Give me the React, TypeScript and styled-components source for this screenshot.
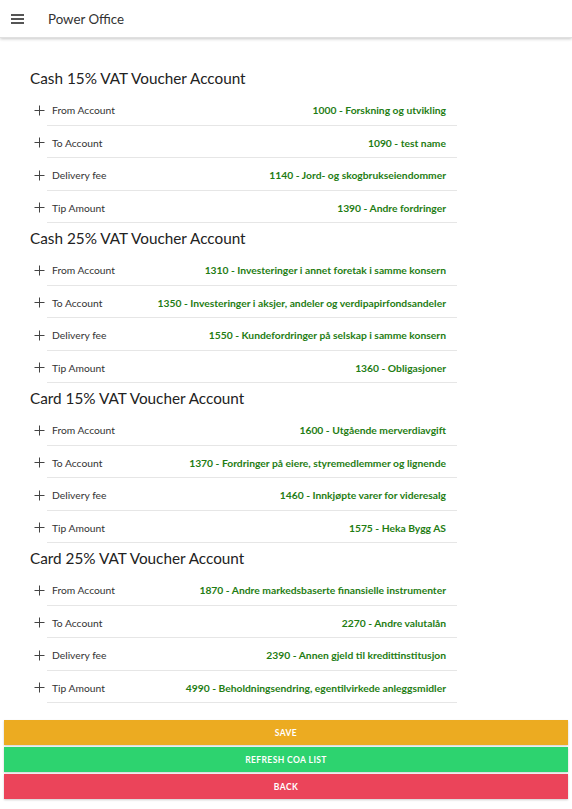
import React from 'react';
import styled, { createGlobalStyle } from 'styled-components';

const GlobalStyle = createGlobalStyle`
  html, body {
    margin: 0;
    padding: 0;
    background: #fff;
    font-family: Lato, "Noto Sans", sans-serif;
    color: #333;
  }
`;

const Header = styled.header`
  height: 38px;
  display: flex;
  align-items: center;
  padding-left: 11px;
  gap: 13px;
  background: #fff;
  box-shadow: 0 1px 3px rgba(0, 0, 0, 0.22);
  border-bottom: 1px solid #e0e0e0;
  box-sizing: border-box;
`;

const MenuButton = styled.div`
  width: 13px;
  display: flex;
  flex-direction: column;
  gap: 2px;
  span {
    display: block;
    height: 2px;
    background: #555;
  }
`;

const HeaderTitle = styled.div`
  font-size: 13.3px;
  color: #333;
  margin-left: 11px;
`;

const Content = styled.main`
  padding: 25px 0 0 30px;
  width: 427px;
`;

const SectionTitle = styled.h2`
  margin: 0;
  height: 30px;
  display: flex;
  align-items: center;
  font-size: 15.3px;
  font-weight: 400;
  color: #222;
`;

const Row = styled.div`
  display: flex;
  align-items: stretch;
  height: 32.5px;
`;

const IconCell = styled.div`
  width: 16px;
  display: flex;
  align-items: center;
  justify-content: center;
  padding: 2px 0 0 1px;
`;

const RowInner = styled.div`
  flex: 1;
  display: flex;
  align-items: center;
  justify-content: space-between;
  padding: 3px 11px 0 5px;
  border-bottom: 1px solid #e6e6e6;
`;

const Label = styled.span`
  font-size: 10.3px;
  color: #333;
`;

const Value = styled.span`
  font-size: 10.3px;
  font-weight: 700;
  color: #1f7d14;
`;

const Buttons = styled.div`
  display: flex;
  flex-direction: column;
  gap: 2px;
  padding: 17px 4px 10px;
`;

const Button = styled.button<{ $bg: string }>`
  height: 25px;
  border: none;
  background: ${(p) => p.$bg};
  color: #fff;
  font-family: Lato, "Noto Sans", sans-serif;
  font-size: 8.5px;
  font-weight: 700;
  letter-spacing: 0.4px;
  box-shadow: 0 1px 2px rgba(0, 0, 0, 0.2);
  cursor: pointer;
`;

const Plus = () => (
  <svg width="11" height="11" viewBox="0 0 11 11">
    <path d="M5.5 0.5v10M0.5 5.5h10" stroke="#444" strokeWidth="1" fill="none" />
  </svg>
);

const sections = [
  {
    title: 'Cash 15% VAT Voucher Account',
    values: ['1000 - Forskning og utvikling', '1090 - test name', '1140 - Jord- og skogbrukseiendommer', '1390 - Andre fordringer'],
  },
  {
    title: 'Cash 25% VAT Voucher Account',
    values: [
      '1310 - Investeringer i annet foretak i samme konsern',
      '1350 - Investeringer i aksjer, andeler og verdipapirfondsandeler',
      '1550 - Kundefordringer på selskap i samme konsern',
      '1360 - Obligasjoner',
    ],
  },
  {
    title: 'Card 15% VAT Voucher Account',
    values: [
      '1600 - Utgående merverdiavgift',
      '1370 - Fordringer på eiere, styremedlemmer og lignende',
      '1460 - Innkjøpte varer for videresalg',
      '1575 - Heka Bygg AS',
    ],
  },
  {
    title: 'Card 25% VAT Voucher Account',
    values: [
      '1870 - Andre markedsbaserte finansielle instrumenter',
      '2270 - Andre valutalån',
      '2390 - Annen gjeld til kredittinstitusjon',
      '4990 - Beholdningsendring, egentilvirkede anleggsmidler',
    ],
  },
];

const labels = ['From Account', 'To Account', 'Delivery fee', 'Tip Amount'];

export default function App() {
  return (
    <>
      <GlobalStyle />
      <Header>
        <MenuButton>
          <span />
          <span />
          <span />
        </MenuButton>
        <HeaderTitle>Power Office</HeaderTitle>
      </Header>
      <Content>
        {sections.map((s) => (
          <section key={s.title}>
            <SectionTitle>{s.title}</SectionTitle>
            {labels.map((l, i) => (
              <Row key={l}>
                <IconCell>
                  <Plus />
                </IconCell>
                <RowInner>
                  <Label>{l}</Label>
                  <Value>{s.values[i]}</Value>
                </RowInner>
              </Row>
            ))}
          </section>
        ))}
      </Content>
      <Buttons>
        <Button $bg="#ecab21">SAVE</Button>
        <Button $bg="#2dd36f">REFRESH COA LIST</Button>
        <Button $bg="#eb445a">BACK</Button>
      </Buttons>
    </>
  );
}
